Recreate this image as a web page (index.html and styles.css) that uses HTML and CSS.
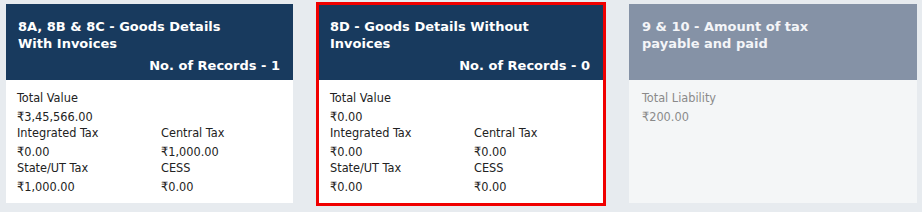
FILE: index.html
```html
<!DOCTYPE html>
<html lang="en">
<head>
    <meta charset="UTF-8">
    <meta name="viewport" content="width=device-width, initial-scale=1.0">
    <title>GSTR-4 Summary</title>
    <link rel="stylesheet" href="styles.css">
</head>
<body>
    <div class="tiles">
        <div class="tile">
            <div class="tile-head">
                <div class="tile-title">8A, 8B &amp; 8C - Goods Details<br>With Invoices</div>
                <div class="tile-count">No. of Records - 1</div>
            </div>
            <div class="tile-body">
                <div class="row">
                    <div class="cell">
                        <div class="label">Total Value</div>
                        <div class="value">₹3,45,566.00</div>
                    </div>
                </div>
                <div class="row">
                    <div class="cell">
                        <div class="label">Integrated Tax</div>
                        <div class="value">₹0.00</div>
                    </div>
                    <div class="cell">
                        <div class="label">Central Tax</div>
                        <div class="value">₹1,000.00</div>
                    </div>
                </div>
                <div class="row">
                    <div class="cell">
                        <div class="label">State/UT Tax</div>
                        <div class="value">₹1,000.00</div>
                    </div>
                    <div class="cell">
                        <div class="label">CESS</div>
                        <div class="value">₹0.00</div>
                    </div>
                </div>
            </div>
        </div>

        <div class="tile selected">
            <div class="tile-head">
                <div class="tile-title">8D - Goods Details Without<br>Invoices</div>
                <div class="tile-count">No. of Records - 0</div>
            </div>
            <div class="tile-body">
                <div class="row">
                    <div class="cell">
                        <div class="label">Total Value</div>
                        <div class="value">₹0.00</div>
                    </div>
                </div>
                <div class="row">
                    <div class="cell">
                        <div class="label">Integrated Tax</div>
                        <div class="value">₹0.00</div>
                    </div>
                    <div class="cell">
                        <div class="label">Central Tax</div>
                        <div class="value">₹0.00</div>
                    </div>
                </div>
                <div class="row">
                    <div class="cell">
                        <div class="label">State/UT Tax</div>
                        <div class="value">₹0.00</div>
                    </div>
                    <div class="cell">
                        <div class="label">CESS</div>
                        <div class="value">₹0.00</div>
                    </div>
                </div>
            </div>
        </div>

        <div class="tile disabled">
            <div class="tile-head">
                <div class="tile-title">9 &amp; 10 - Amount of tax<br>payable and paid</div>
            </div>
            <div class="tile-body">
                <div class="row">
                    <div class="cell">
                        <div class="label">Total Liability</div>
                        <div class="value">₹200.00</div>
                    </div>
                </div>
            </div>
        </div>
    </div>
</body>
</html>
```

FILE: styles.css
```css
body {
    margin: 0;
    background: #e7ebef;
    font-family: "DejaVu Sans", Verdana, sans-serif;
}
.tiles {
    display: flex;
    align-items: flex-start;
    padding: 4px 0 0 6px;
}
.tile {
    width: 287px;
    height: 199px;
    flex-shrink: 0;
    background: #ffffff;
    display: flex;
    flex-direction: column;
}
.tile.selected {
    box-sizing: border-box;
    width: 290px;
    height: 204px;
    margin: -2px 0 0 23px;
    border: 3px solid #f00000;
}
.tile.disabled {
    width: 288px;
    margin-left: 23px;
    background: #f4f6f7;
}
.tile-head {
    height: 76px;
    flex-shrink: 0;
    box-sizing: border-box;
    padding: 14px 13px 0 12px;
    background: #183a5e;
    color: #ffffff;
    font-size: 13px;
    font-weight: bold;
    line-height: 17px;
}
.selected .tile-head {
    height: 75px;
    padding-top: 13px;
    padding-left: 11px;
}
.disabled .tile-head {
    background: #8592a6;
    padding-left: 13px;
    color: #f4f5f8;
}
.tile-count {
    margin-top: 5px;
    text-align: right;
}
.tile-body {
    padding: 10px 11px 0;
    font-size: 12.6px;
    font-stretch: condensed;
    line-height: 16px;
    color: #222222;
}
.disabled .tile-body {
    padding-left: 13px;
    color: #8a8a8a;
}
.row {
    display: flex;
}
.cell {
    width: 144px;
    flex-shrink: 0;
}
.label {
    margin-bottom: 3px;
}
```
